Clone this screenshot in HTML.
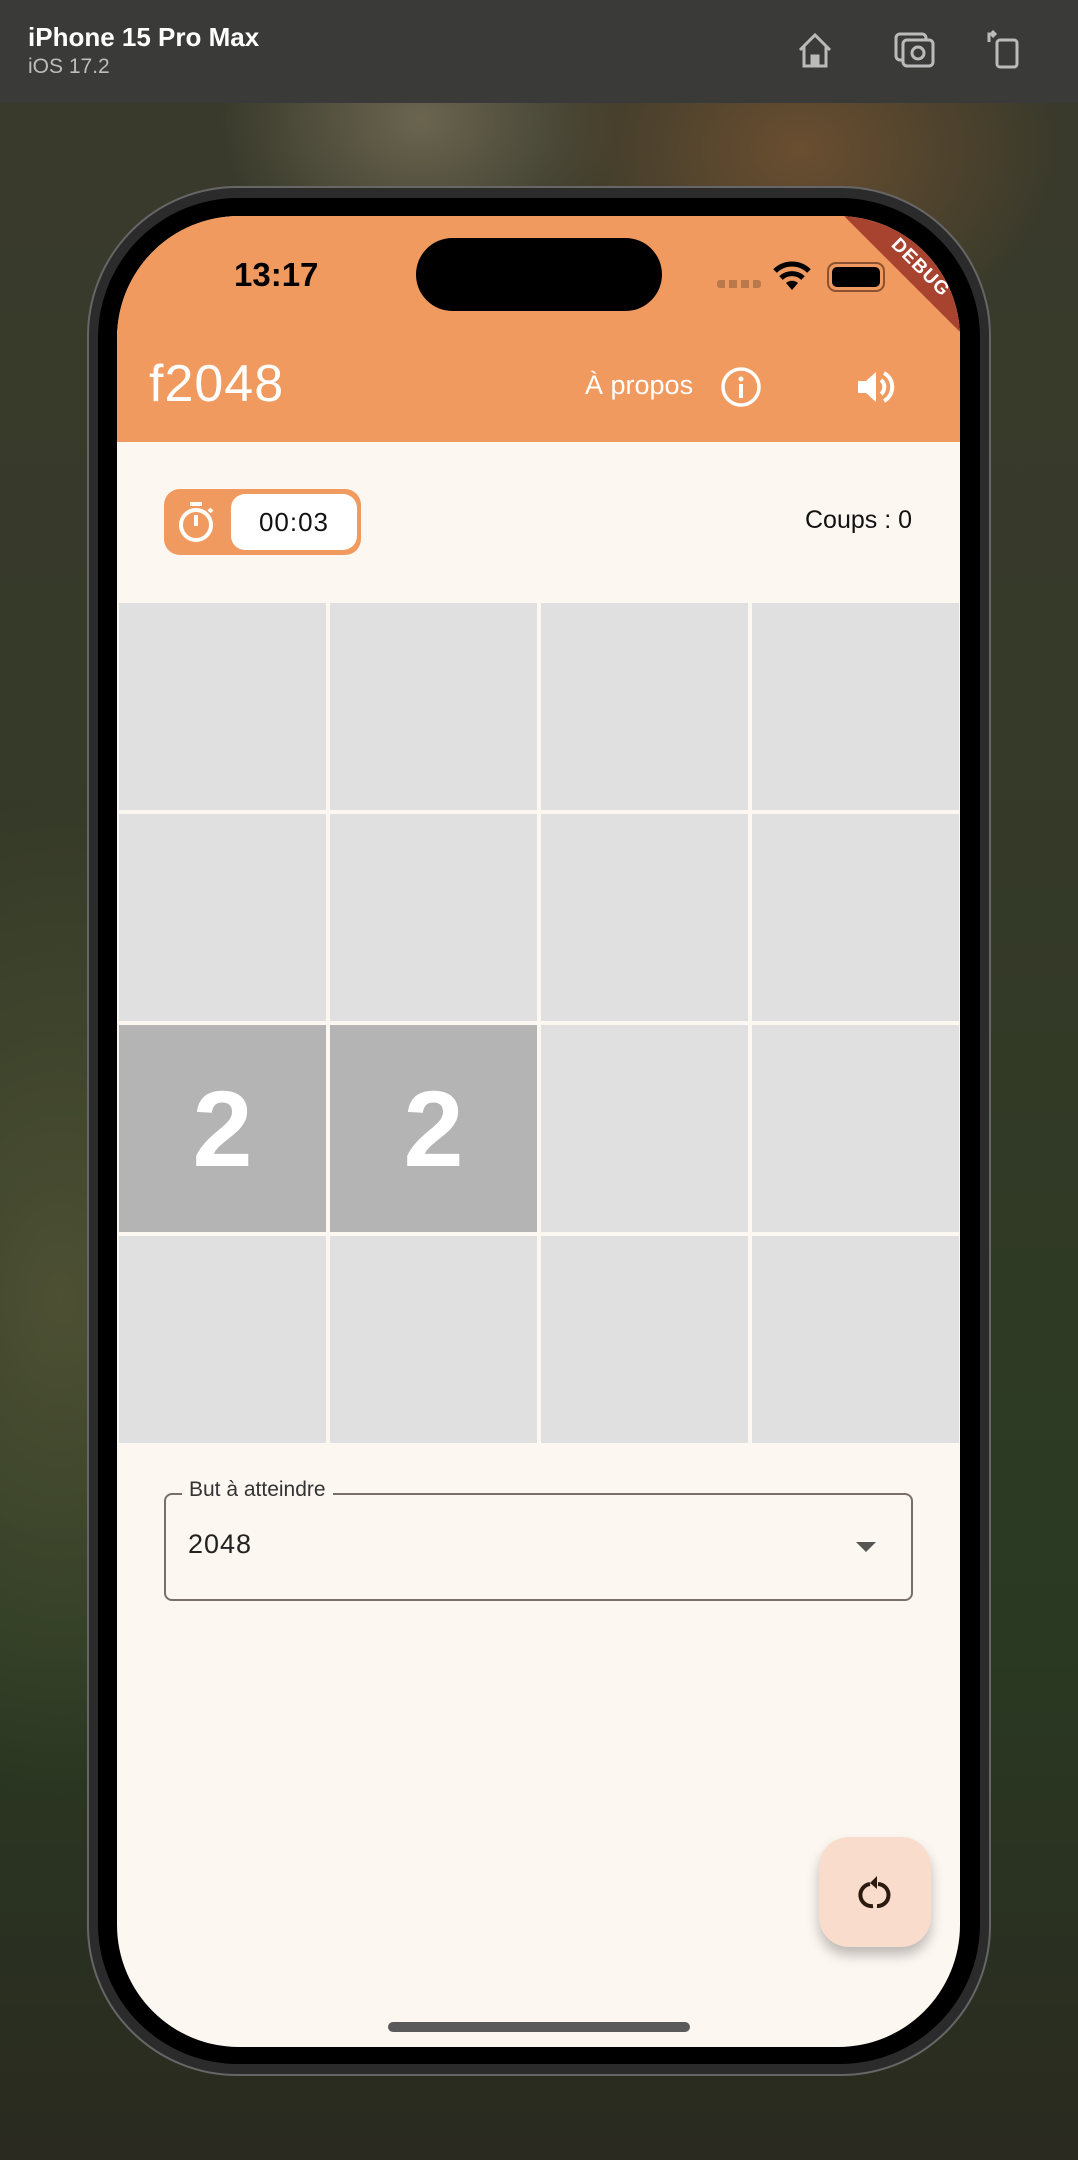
<!DOCTYPE html>
<html><head><meta charset="utf-8">
<style>
*{margin:0;padding:0;box-sizing:border-box}
body{width:1078px;height:2160px;overflow:hidden;position:relative;font-family:"Liberation Sans","DejaVu Sans",sans-serif;
background:radial-gradient(ellipse 300px 500px at 60px 1300px,#4d5033 0%,rgba(77,80,51,0) 100%),radial-gradient(ellipse 260px 200px at 800px 150px,#6a4e30 0%,rgba(0,0,0,0) 100%),radial-gradient(ellipse 200px 160px at 420px 120px,#6b6550 0%,rgba(0,0,0,0) 100%),linear-gradient(180deg,#3a3a2c 0%,#353a28 40%,#2a3a22 75%,#2a2a20 100%);}
.top{position:absolute;left:0;top:0;width:1078px;height:103px;background:#3a3a38}
.top .t1{position:absolute;left:28px;top:22px;color:#fff;font-weight:bold;font-size:26px}
.top .t2{position:absolute;left:28px;top:55px;color:#bdbdbd;font-size:21px}
.phone{position:absolute;left:87px;top:186px;width:904px;height:1890px;border-radius:150px;background:#2b2b2b;border:2px solid #666}
.bezel{position:absolute;left:98px;top:198px;width:882px;height:1866px;border-radius:140px;background:#000}
.screen{position:absolute;left:117px;top:216px;width:843px;height:1831px;border-radius:122px;background:#fdf7f2;overflow:hidden}
.appbar{position:absolute;left:0;top:0;width:843px;height:226px;background:#f09a5f;overflow:hidden}
.island{position:absolute;left:299px;top:22px;width:246px;height:73px;border-radius:37px;background:#000}
.time{position:absolute;left:117px;top:40px;font-weight:bold;font-size:33px;color:#000}
.title{position:absolute;left:32px;top:138px;font-size:52px;color:#fff;letter-spacing:1px}
.apropos{position:absolute;left:468px;top:154px;font-size:27px;color:#fff}
.cell{position:absolute;width:207px;height:207px;background:#e0e0e0}
.cell.v{background:#b4b4b4;color:#fff;font-weight:bold;font-size:108px;text-align:center;line-height:207px}
.pill{position:absolute;left:47px;top:273px;width:197px;height:66px;border-radius:16px;background:#f09a5f}
.pill .in{position:absolute;left:67px;top:5px;width:126px;height:56px;border-radius:14px;background:#fff;font-size:26px;text-align:center;line-height:56px;color:#111;letter-spacing:1px}
.coups{position:absolute;right:48px;top:290px;font-size:25px;color:#111}
.dd{position:absolute;left:47px;top:1277px;width:749px;height:108px;border:2px solid #7a6e6a;border-radius:8px}
.dd .lab{position:absolute;left:16px;top:-17px;background:#fdf7f2;padding:0 7px;font-size:21px;color:#333}
.dd .val{position:absolute;left:22px;top:34px;font-size:27px;color:#222;letter-spacing:1px}
.dd .arr{position:absolute;right:35px;top:47px;width:0;height:0;border-left:10px solid transparent;border-right:10px solid transparent;border-top:10px solid #555}
.fab{position:absolute;left:702px;top:1621px;width:112px;height:110px;border-radius:30px;background:#f9dccc;box-shadow:0 8px 12px rgba(0,0,0,.25)}
.home{position:absolute;left:271px;top:1806px;width:302px;height:10px;border-radius:5px;background:#5a5a5a}
</style></head><body>
<div class="top"><div class="t1">iPhone 15 Pro Max</div><div class="t2">iOS 17.2</div>
<svg style="position:absolute;left:795px;top:30px" width="40" height="40" viewBox="0 0 40 40" fill="none" stroke="#bbb" stroke-width="3"><path d="M5 20 L20 5 L35 20 M9 17 V36 H31 V17"/><rect x="17" y="26" width="6" height="10" fill="#bbb"/></svg>
<svg style="position:absolute;left:893px;top:30px" width="44" height="40" viewBox="0 0 44 40" fill="none" stroke="#bbb" stroke-width="3"><rect x="3" y="4" width="30" height="26" rx="4"/><rect x="10" y="10" width="30" height="26" rx="4" fill="#3a3a38"/><circle cx="25" cy="23" r="6"/></svg>
<svg style="position:absolute;left:985px;top:28px" width="36" height="42" viewBox="0 0 36 42" fill="none" stroke="#bbb" stroke-width="3"><rect x="12" y="12" width="20" height="27" rx="3"/><path d="M4 14 V6 H10 M7 3 L10 6 L7 9"/></svg>
</div>
<div class="phone"></div><div class="bezel"></div>
<div class="screen">
 <div class="appbar">
  <div class="island"></div>
  <div class="time">13:17</div>
  <div style="position:absolute;left:600px;top:64px;width:44px;height:8px;background:repeating-linear-gradient(90deg,#b9794c 0 8px,transparent 8px 12px);border-radius:3px"></div>
  <svg style="position:absolute;left:655px;top:44px" width="40" height="32" viewBox="0 0 40 32"><path d="M20 30 L26 23 A9 9 0 0 0 14 23Z" fill="#000"/><path d="M9 18 A16 16 0 0 1 31 18" stroke="#000" stroke-width="5" fill="none"/><path d="M3 11 A24 24 0 0 1 37 11" stroke="#000" stroke-width="5" fill="none"/></svg>
  <div style="position:absolute;left:710px;top:46px;width:58px;height:30px;border:2px solid #8a5230;border-radius:9px;padding:3px"><div style="width:100%;height:100%;background:#000;border-radius:5px"></div></div>
  <div style="position:absolute;left:693px;top:35px;width:220px;height:34px;background:#a8432f;transform:rotate(45deg);color:#fff;font-weight:bold;font-size:19px;text-align:center;line-height:34px;letter-spacing:1px">DEBUG</div>
  <div class="title">f2048</div>
  <div class="apropos">À propos</div>
  <svg style="position:absolute;left:603px;top:150px" width="42" height="42" viewBox="0 0 42 42"><circle cx="21" cy="21" r="18" stroke="#fff" stroke-width="3.5" fill="none"/><circle cx="21" cy="13" r="2.5" fill="#fff"/><rect x="19" y="18" width="4" height="14" fill="#fff"/></svg>
  <svg style="position:absolute;left:738px;top:152px" width="40" height="38" viewBox="0 0 40 38"><path d="M3 13 H11 L21 4 V34 L11 25 H3Z" fill="#fff"/><path d="M26 12 A9 9 0 0 1 26 26" stroke="#fff" stroke-width="4" fill="none"/><path d="M29 5 A16 16 0 0 1 29 33" stroke="#fff" stroke-width="4" fill="none"/></svg>
 </div>
 <div class="pill">
  <svg style="position:absolute;left:12px;top:12px" width="40" height="42" viewBox="0 0 40 42"><rect x="14" y="1" width="12" height="4" fill="#fff"/><circle cx="20" cy="24" r="15" stroke="#fff" stroke-width="4" fill="none"/><rect x="18" y="14" width="4" height="11" fill="#fff"/><path d="M33 8 L36 11" stroke="#fff" stroke-width="4"/></svg>
  <div class="in">00:03</div>
 </div>
 <div class="coups">Coups : 0</div>
 <div class="cell" style="left:2px;top:387px"></div><div class="cell" style="left:213px;top:387px"></div><div class="cell" style="left:424px;top:387px"></div><div class="cell" style="left:635px;top:387px"></div>
 <div class="cell" style="left:2px;top:598px"></div><div class="cell" style="left:213px;top:598px"></div><div class="cell" style="left:424px;top:598px"></div><div class="cell" style="left:635px;top:598px"></div>
 <div class="cell v" style="left:2px;top:809px">2</div><div class="cell v" style="left:213px;top:809px">2</div><div class="cell" style="left:424px;top:809px"></div><div class="cell" style="left:635px;top:809px"></div>
 <div class="cell" style="left:2px;top:1020px"></div><div class="cell" style="left:213px;top:1020px"></div><div class="cell" style="left:424px;top:1020px"></div><div class="cell" style="left:635px;top:1020px"></div>
 <div class="dd"><div class="lab">But à atteindre</div><div class="val">2048</div><div class="arr"></div></div>
 <div class="fab"><svg style="position:absolute;left:38px;top:36px" width="36" height="38" viewBox="0 0 36 38"><path d="M13 11 A11 11 0 0 0 16 33" stroke="#2a1a10" stroke-width="4" fill="none"/><path d="M21 11 A11 11 0 0 1 20 33" stroke="#2a1a10" stroke-width="4" fill="none"/><path d="M20 3 L13 10 L20 16Z" fill="#2a1a10"/></svg></div>
 <div class="home"></div>
</div>
</body></html>
